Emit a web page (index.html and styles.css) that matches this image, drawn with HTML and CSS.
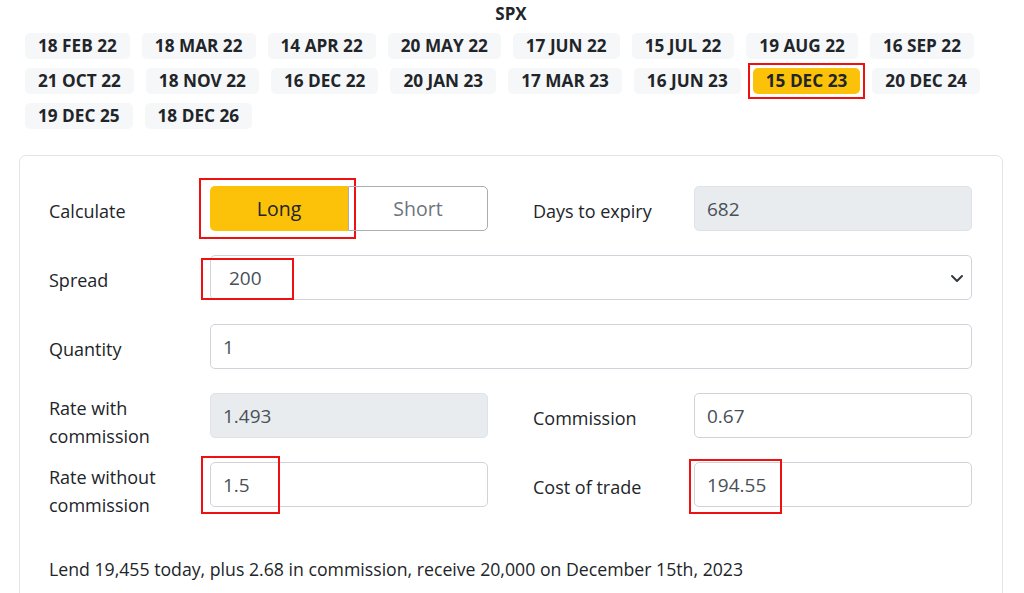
FILE: index.html
```html
<!DOCTYPE html>
<html>
<head>
<meta charset="utf-8">
<link rel="stylesheet" href="styles.css">
</head>
<body>
<div class="page">
  <div class="title">SPX</div>
  <div class="dates">
    <span class="pill">18 FEB 22</span>
    <span class="pill">18 MAR 22</span>
    <span class="pill">14 APR 22</span>
    <span class="pill">20 MAY 22</span>
    <span class="pill">17 JUN 22</span>
    <span class="pill">15 JUL 22</span>
    <span class="pill">19 AUG 22</span>
    <span class="pill">16 SEP 22</span>
    <span class="pill">21 OCT 22</span>
    <span class="pill">18 NOV 22</span>
    <span class="pill">16 DEC 22</span>
    <span class="pill">20 JAN 23</span>
    <span class="pill">17 MAR 23</span>
    <span class="pill">16 JUN 23</span>
    <span class="pill active">15 DEC 23<span class="mark mark-date"></span></span>
    <span class="pill">20 DEC 24</span>
    <span class="pill">19 DEC 25</span>
    <span class="pill">18 DEC 26</span>
  </div>

  <div class="card">
    <div class="form">
      <label class="lbl c1">Calculate</label>
      <div class="toggle c2">
        <span class="tbtn long">Long<span class="mark mark-long"></span></span>
        <span class="tbtn short">Short</span>
      </div>
      <label class="lbl c4">Days to expiry</label>
      <div class="field disabled c5">682</div>

      <label class="lbl c1">Spread</label>
      <div class="field select wide">200
        <svg class="chev" width="14" height="9" viewBox="0 0 14 9"><polyline points="2,2 7,7 12,2" fill="none" stroke="#343a40" stroke-width="2" stroke-linecap="round" stroke-linejoin="round"/></svg>
        <span class="mark mark-spread"></span>
      </div>

      <label class="lbl c1">Quantity</label>
      <div class="field wide">1</div>

      <label class="lbl two c1">Rate with commission</label>
      <div class="field disabled c2">1.493</div>
      <label class="lbl c4">Commission</label>
      <div class="field c5">0.67</div>

      <label class="lbl two c1">Rate without commission</label>
      <div class="field c2">1.5<span class="mark mark-rate"></span></div>
      <label class="lbl c4">Cost of trade</label>
      <div class="field c5">194.55<span class="mark mark-cost"></span></div>
    </div>
    <p class="summary">Lend 19,455 today, plus 2.68 in commission, receive 20,000 on December 15th, 2023</p>
  </div>
</div>
</body>
</html>
```

FILE: styles.css
```css
* { box-sizing: border-box; }
html, body { margin: 0; padding: 0; background: #fff; }
body {
  font-family: "Open Sans", "Noto Sans", "Liberation Sans", sans-serif;
  color: #212529;
  font-size: 19px;
  overflow: hidden;
}
.page {
  width: 984px;
  margin-left: 19px;
}
.title {
  text-align: center;
  font-weight: 700;
  font-size: 17px;
  line-height: 20px;
  padding-top: 4px;
  height: 33px;
}
.dates {
  display: flex;
  flex-wrap: wrap;
  gap: 9px 12px;
  padding-left: 6px;
  padding-right: 16px;
}
.pill {
  position: relative;
  background: #f6f7f8;
  border-radius: 5px;
  font-weight: 700;
  font-size: 17.2px;
  line-height: 26px;
  height: 26px;
  padding: 0 13px;
  color: #212529;
}
.pill.active { background: #fcc209; }
.mark {
  position: absolute;
  border: 2.5px solid #ee1111;
  pointer-events: none;
}
.mark-date { left: -5px; top: -5px; width: calc(100% + 10px); height: 36px; }
.card {
  margin-top: 26px;
  border: 1px solid #e2e4e6;
  border-radius: 7px;
  padding: 30px 30px 40px 29px;
  height: 480px;
}
.form {
  display: grid;
  grid-template-columns: 161px 278px 45px 161px 278px;
  grid-auto-rows: 45px;
  row-gap: 24px;
  align-items: center;
}
.c1 { grid-column: 1; }
.c2 { grid-column: 2; }
.c4 { grid-column: 4; }
.c5 { grid-column: 5; }
.wide { grid-column: 2 / 6; }
.lbl {
  font-size: 18px;
  line-height: 28px;
  color: #212529;
  margin-top: 4px;
}
.lbl.two { align-self: start; margin-top: 1px; }
.toggle {
  display: flex;
  height: 45px;
}
.tbtn {
  position: relative;
  flex: 1;
  display: flex;
  align-items: center;
  justify-content: center;
  font-size: 19.5px;
}
.long {
  background: #fcc209;
  border-radius: 5px 0 0 5px;
  color: #212529;
}
.short {
  border: 1px solid #a9aeb3;
  border-radius: 0 5px 5px 0;
  color: #6c757d;
}
.mark-long { left: -11px; top: -8px; width: 157px; height: 61px; }
.field {
  position: relative;
  height: 45px;
  border: 1px solid #ced4da;
  border-radius: 5px;
  padding: 0 12px;
  display: flex;
  align-items: center;
  font-size: 19px;
  color: #495057;
  background: #fff;
}
.field.disabled { background: #e9ecef; border-color: #dfe3e7; }
.select { padding-left: 18px; }
.chev { position: absolute; right: 7px; top: 18px; }
.mark-spread { left: -10px; top: 2px; width: 93px; height: 42px; }
.mark-rate { left: -10px; top: -7px; width: 79px; height: 58px; }
.mark-cost { left: -6px; top: -4px; width: 93px; height: 55px; }
.summary {
  margin: 48px 0 0 0;
  font-size: 17.7px;
  line-height: 28px;
  color: #212529;
}
```
